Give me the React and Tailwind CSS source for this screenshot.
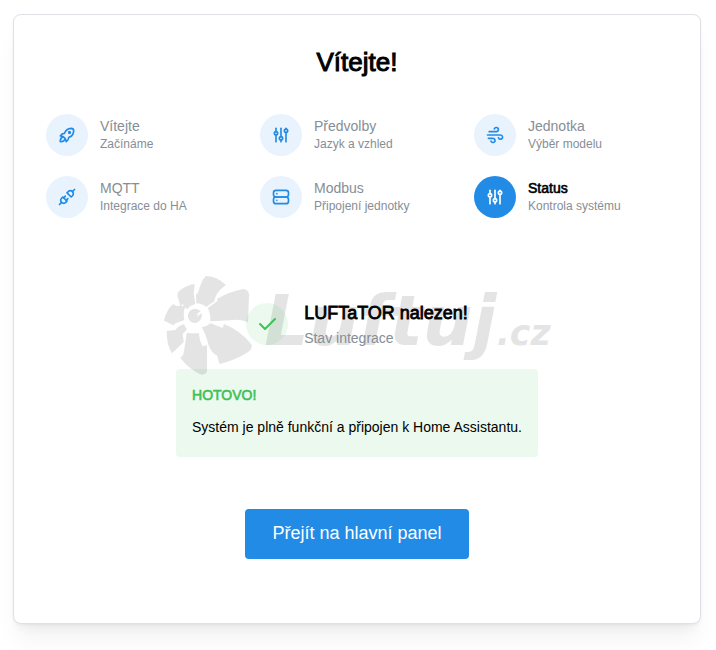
import React from "react";
import {
  TbAdjustments,
  TbCheck,
  TbPlugConnected,
  TbRocket,
  TbServer,
  TbWind,
} from "react-icons/tb";

const steps = [
  { label: "Vítejte", description: "Začínáme", icon: TbRocket },
  { label: "Předvolby", description: "Jazyk a vzhled", icon: TbAdjustments },
  { label: "Jednotka", description: "Výběr modelu", icon: TbWind },
  { label: "MQTT", description: "Integrace do HA", icon: TbPlugConnected },
  { label: "Modbus", description: "Připojení jednotky", icon: TbServer },
  { label: "Status", description: "Kontrola systému", icon: TbAdjustments, active: true },
];

function Step({ label, description, icon: Icon, active }) {
  return (
    <button
      type="button"
      aria-current={active ? "step" : undefined}
      className="flex items-center gap-3 text-left"
    >
      <span
        className={`flex size-[42px] shrink-0 items-center justify-center rounded-full ${
          active ? "bg-[#228be6] text-white" : "bg-[#e9f3fd] text-[#228be6]"
        }`}
      >
        <Icon size={20} />
      </span>
      <span className="flex flex-col">
        <span
          className={`text-[14px] leading-[18px] ${
            active ? "text-black [-webkit-text-stroke:0.6px_black]" : "text-[#868e96]"
          }`}
        >
          {label}
        </span>
        <span className="text-[12px] leading-[18px] text-[#868e96]">{description}</span>
      </span>
    </button>
  );
}

/* Brand mark behind the status block: fan blades + wordmark. */
function Watermark() {
  return (
    <svg
      viewBox="4 0 1200 330"
      aria-hidden="true"
      className="pointer-events-none absolute -top-[34px] left-1/2 h-[110px] w-[400px] -translate-x-1/2 opacity-10"
    >
      <g transform="translate(19 27)">
        <path d="M103 88 L102 62 L109 55 Q118 18 132 6 Q166 8 192 33 Q170 46 160 70 L157 82 Q144 90 133 99 Q120 88 103 88Z" />
        <path d="M137 102 L166 82 L166 74 Q205 52 245 45 Q260 48 261 62 L258 145 Q240 135 215 138 L145 142 Q146 118 137 102Z" />
        <path d="M120 160 Q136 157 146 148 L182 162 L186 150 Q236 170 269 212 Q272 222 258 234 Q222 258 172 270 L166 245 Q150 240 140 214 Q134 186 120 160Z" />
        <path d="M74 176 Q94 180 110 177 Q112 198 121 217 L135 214 L135 292 Q130 303 118 302 Q84 288 55 252 L64 242 Q70 210 74 176Z" />
        <path d="M14 171 L40 168 Q48 156 66 150 Q69 160 75 166 L62 180 L65 204 L30 238 Q14 214 14 171Z" />
        <path d="M33 90 L44 97 Q56 92 70 97 Q62 118 67 138 L40 148 L35 154 L6 140 Q12 110 33 90Z" />
        <path d="M46 64 Q46 54 58 46 Q74 34 98 30 L95 58 L100 90 Q84 94 74 106 L62 90 L55 96Z" />
        <path d="M98 104 Q110 104 116 112 L103 121 L109 122 L101 131 L119 118 Q122 130 113 140 Q103 150 90 145 Q76 138 78 122 Q82 106 98 104Z" />
      </g>
      <g fontFamily="DejaVu Sans, sans-serif" fontWeight="bold" fontStyle="italic">
        <text x="326" y="240" fontSize="210">Luftuj</text>
        <text x="1023" y="240" fontSize="104">.cz</text>
      </g>
    </svg>
  );
}

export default function App() {
  return (
    <div className="min-h-screen bg-white p-[14px] pr-[15px] pl-[13px] font-['Liberation_Sans',Arial,sans-serif] text-black">
      <main className="flex flex-col rounded-lg border border-[#dee2e6] bg-white px-8 pt-8 pb-16 shadow-[0_1px_3px_rgba(0,0,0,0.05),0_20px_25px_-5px_rgba(0,0,0,0.05),0_10px_10px_-5px_rgba(0,0,0,0.04)]">
        <h1 className="text-center text-[26px] leading-[30px] [-webkit-text-stroke:1px_black]">Vítejte!</h1>

        <nav aria-label="Kroky" className="mt-[37px] grid grid-cols-3 gap-5">
          {steps.map((step) => (
            <Step key={step.label} {...step} />
          ))}
        </nav>

        <section className="relative mt-[81px] flex flex-col items-center">
          <Watermark />
          <div className="relative flex items-center gap-4">
            <span className="flex size-[42px] items-center justify-center rounded-full bg-[#40c057]/10 text-[#40c057]">
              <TbCheck size={24} />
            </span>
            <div>
              <h2 className="text-[18px] leading-7 [-webkit-text-stroke:0.8px_black]">LUFTaTOR nalezen!</h2>
              <p className="text-[14px] leading-[22px] text-[#868e96]">Stav integrace</p>
            </div>
          </div>

          <div role="status" className="relative mt-5 rounded bg-[#40c057]/10 p-4">
            <p className="text-[14px] leading-5 text-[#40c057] [-webkit-text-stroke:0.6px_#40c057]">HOTOVO!</p>
            <p className="mt-3 mb-1 text-[14px] leading-5">
              Systém je plně funkční a připojen k Home Assistantu.
            </p>
          </div>
        </section>

        <button
          type="button"
          className="mt-[52px] h-[50px] self-center rounded bg-[#228be6] px-[27px] pb-[2px] text-[18px] text-white"
        >
          Přejít na hlavní panel
        </button>
      </main>
    </div>
  );
}
